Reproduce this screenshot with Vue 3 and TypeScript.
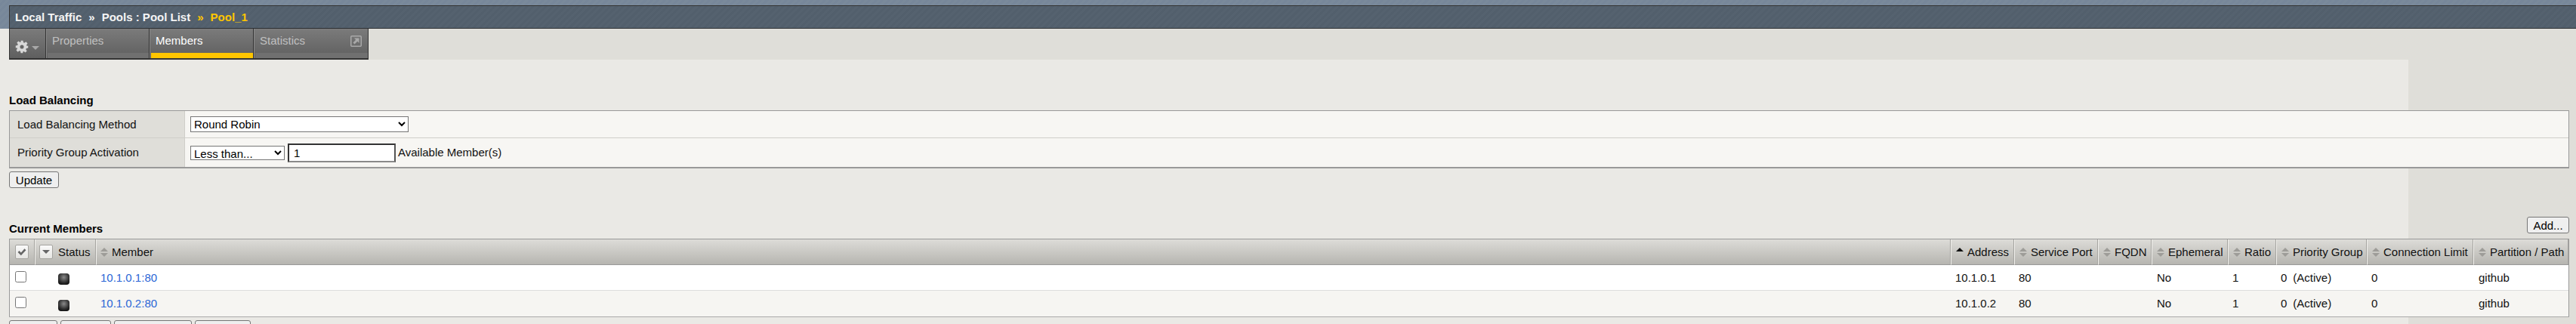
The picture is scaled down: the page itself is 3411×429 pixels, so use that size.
<script setup lang="ts">
// Pool member page: breadcrumb, tabs, load balancing form, current members table
interface Member {
  name: string;
  address: string;
  port: string;
  ephemeral: string;
  ratio: string;
  group: string;
  limit: string;
  partition: string;
}

const members: Member[] = [
  { name: '10.1.0.1:80', address: '10.1.0.1', port: '80', ephemeral: 'No', ratio: '1', group: '0', limit: '0', partition: 'github' },
  { name: '10.1.0.2:80', address: '10.1.0.2', port: '80', ephemeral: 'No', ratio: '1', group: '0', limit: '0', partition: 'github' },
];

const sortColumns = ['Service Port', 'FQDN', 'Ephemeral', 'Ratio', 'Priority Group', 'Connection Limit', 'Partition / Path'];
const colWidths = [33, 81, 2456, 84, 111, 71, 101, 64, 120, 141, 126];
const footerButtons = [
  { label: 'Enable', width: 64 },
  { label: 'Disable', width: 67 },
  { label: 'Force Offline', width: 103 },
  { label: 'Remove', width: 74 },
];
</script>

<template>
  <div class="page">
    <header class="banner">
      <div class="crumbs">
        <span>Local Traffic</span>
        <span class="sep">»</span>
        <span>Pools : Pool List</span>
        <span class="sep current">»</span>
        <span class="current">Pool_1</span>
      </div>
    </header>

    <div class="strip">
      <nav class="tabs">
        <div class="tab gear">
          <svg class="gear-icon" viewBox="0 0 24 24" width="18" height="18">
            <path fill="#d8d8d8" d="M10 1h4l.6 3.2 1.9.8 2.7-1.900 2.800 2.800-1.900 2.700.8 1.900L23 10v4l-3.200.6-.8 1.900 1.900 2.700-2.800 2.800-2.700-1.900-1.900.8L14 23h-4l-.6-3.200-1.900-.8-2.700 1.900-2.800-2.800 1.900-2.700-.8-1.900L1 14v-4l3.200-.6.8-1.900-1.900-2.700 2.800-2.800 2.700 1.900 1.900-.8z" />
            <circle cx="12" cy="12" r="3.400" fill="#666" />
          </svg>
          <span class="caret"></span>
        </div>
        <div class="tab prop">Properties</div>
        <div class="tab active">Members</div>
        <div class="tab stats">
          <span>Statistics</span>
          <svg class="ext" viewBox="0 0 15 15" width="15" height="15">
            <rect x="0.750" y="0.750" width="13.500" height="13.500" rx="1" fill="none" stroke="#a9a9a9" stroke-width="1.500" />
            <path d="M5 3.500h6.500V10L9.300 7.800 5.500 11.500 3.500 9.500l3.700-3.800z" fill="#a9a9a9" />
          </svg>
        </div>
      </nav>
    </div>

    <main class="content">
      <h2 class="title first">Load Balancing</h2>
      <table class="form">
        <tbody>
          <tr class="method">
            <th>Load Balancing Method</th>
            <td>
              <select class="sel wide"><option>Round Robin</option></select>
            </td>
          </tr>
          <tr class="priority">
            <th>Priority Group Activation</th>
            <td>
              <div class="inline">
                <select class="sel narrow"><option>Less than...</option></select>
                <input class="num" value="1" />
                <span>Available Member(s)</span>
              </div>
            </td>
          </tr>
        </tbody>
      </table>
      <button class="btn update">Update</button>

      <div class="members-head">
        <h2 class="title">Current Members</h2>
        <button class="btn add">Add...</button>
      </div>

      <table class="grid">
        <colgroup>
          <col v-for="(w, i) in colWidths" :key="i" :style="{ width: w + 'px' }" />
        </colgroup>
        <thead>
          <tr>
            <th>
              <span class="hbox">
                <svg viewBox="0 0 18 18" width="14" height="14"><path d="M2 9l2.500-2.500 3 3L13.500 3 16 5.500 7.500 14.500z" fill="#666" /></svg>
              </span>
            </th>
            <th>
              <div class="hcell status-head">
                <span class="hbox"><span class="tri-down"></span></span>
                <span>Status</span>
              </div>
            </th>
            <th>
              <div class="hcell member-head"><span class="sort"></span><span>Member</span></div>
            </th>
            <th>
              <div class="hcell"><span class="sort up"></span><span>Address</span></div>
            </th>
            <th v-for="c in sortColumns" :key="c">
              <div class="hcell"><span class="sort"></span><span>{{ c }}</span></div>
            </th>
          </tr>
        </thead>
        <tbody>
          <tr v-for="m in members" :key="m.name">
            <td class="check"><input type="checkbox" /></td>
            <td class="status"><span class="led"></span></td>
            <td><a class="link" href="#">{{ m.name }}</a></td>
            <td>{{ m.address }}</td>
            <td>{{ m.port }}</td>
            <td></td>
            <td class="wider">{{ m.ephemeral }}</td>
            <td>{{ m.ratio }}</td>
            <td><span class="group">{{ m.group }}</span>(Active)</td>
            <td>{{ m.limit }}</td>
            <td class="wider">{{ m.partition }}</td>
          </tr>
        </tbody>
      </table>

      <div class="footer">
        <button v-for="b in footerButtons" :key="b.label" class="btn" :style="{ width: b.width + 'px' }">{{ b.label }}</button>
      </div>
    </main>
  </div>
</template>

<style scoped>
.page {
  width: 3411px;
  height: 429px;
  overflow: hidden;
  font: 15px/18px "Liberation Sans", Arial, sans-serif;
  color: #111;
  background: linear-gradient(to right, #eae9e5 3189px, #dfded9 3189px);
}
.banner {
  height: 38px;
  padding: 7px 0 0 12px;
  box-sizing: border-box;
  background: repeating-linear-gradient(135deg, #7a8a9b 0 3px, #77879a 3px 6px);
}
.crumbs {
  height: 31px;
  box-sizing: border-box;
  display: flex;
  align-items: center;
  gap: 9px;
  padding-left: 7px;
  border-top: 1px solid #333;
  border-left: 1px solid #333;
  border-bottom: 1px solid #2c2f33;
  font-size: 15px;
  font-weight: bold;
  color: #f4f4f4;
  background: repeating-linear-gradient(135deg, #55626f 0 3px, #525f6c 3px 6px);
}
.crumbs .current {
  color: #ffc600;
}
.strip {
  margin-left: 12px;
  height: 41px;
  background: #dfded9;
}
.tabs {
  display: flex;
  width: 476px;
  height: 41px;
  box-sizing: border-box;
  border: 1px solid #333;
  border-top: none;
  border-bottom-width: 2px;
}
.tab {
  position: relative;
  box-sizing: border-box;
  height: 39px;
  padding: 7px 0 0 8px;
  color: #c0c0c0;
  border-right: 1px solid #333;
  background: linear-gradient(#7b7b7b, #5f5f5f);
}
.tab.prop,
.tab.stats,
.tab.active {
  box-shadow: inset 1px 0 #8a8a8a;
}
.tab.prop::after,
.tab.stats::after,
.tab.active::after {
  content: "";
  position: absolute;
  left: 2px;
  right: 0;
  bottom: 0;
  height: 7px;
  background: #707070;
}
.tab.active::after {
  background: #ffc600;
}
.gear {
  width: 48px;
  display: flex;
  align-items: center;
  gap: 4px;
  padding: 8px 0 0 7px;
}
.caret {
  border-top: 5px solid #a8a8a8;
  border-left: 5px solid transparent;
  border-right: 5px solid transparent;
  margin-top: 4px;
}
.prop {
  width: 137px;
}
.active {
  width: 138px;
  color: #fff;
}
.stats {
  flex: 1;
  display: flex;
  justify-content: space-between;
  border-right: none;
  padding-right: 8px;
}
.ext {
  margin-top: 2px;
}
.content {
  padding: 45px 9px 0 12px;
}
.title {
  margin: 0;
  font-size: 15px;
  line-height: 18px;
  font-weight: bold;
  color: #000;
}
.title.first {
  margin-bottom: 4px;
}
.form {
  width: 3390px;
  table-layout: fixed;
  border-collapse: separate;
  border-spacing: 0;
  border: 1px solid #999;
  border-bottom-width: 2px;
  background: #f7f6f3;
}
.form th {
  width: 232px;
  padding: 0 0 0 10px;
  box-sizing: border-box;
  text-align: left;
  font-weight: normal;
  background: #dfded9;
  border-right: 1px solid #cfcec9;
}
.form td {
  padding: 0 0 0 7px;
}
.form .method th,
.form .method td {
  height: 35px;
  border-bottom: 1px solid #cfcec9;
}
.form .priority th,
.form .priority td {
  height: 38px;
}
.inline {
  display: flex;
  align-items: center;
  gap: 4px;
}
.inline span {
  margin-left: -1px;
}
.sel {
  font: 15px "Liberation Sans", Arial, sans-serif;
  background: #fff;
  border: 1px solid #767676;
  border-radius: 0;
  color: #000;
  box-sizing: border-box;
  display: block;
}
.wide {
  width: 289px;
  height: 21px;
}
.narrow {
  width: 125px;
  height: 19px;
}
.num {
  width: 143px;
  height: 25px;
  box-sizing: border-box;
  margin: 0;
  padding: 0 6px;
  font: 15px "Liberation Sans", Arial, sans-serif;
  background: #fff;
  border: 2px solid #333;
  border-right-color: #555;
  border-bottom-color: #8a8a8a;
}
.btn {
  display: block;
  height: 22px;
  padding: 0;
  box-sizing: border-box;
  font: 15px "Liberation Sans", Arial, sans-serif;
  color: #000;
  background: #efefef;
  border: 1px solid #767676;
  border-radius: 3px;
}
.update {
  width: 66px;
  margin-top: 4px;
}
.members-head {
  margin-top: 38px;
  height: 29px;
  display: flex;
  justify-content: space-between;
  align-items: flex-start;
}
.members-head .title {
  margin-top: 7px;
}
.add {
  width: 56px;
}
.grid {
  width: 3390px;
  table-layout: fixed;
  border-collapse: separate;
  border-spacing: 0;
  border: 1px solid #999;
  border-bottom-color: #aaa;
  background: #fff;
}
.grid th {
  height: 33px;
  padding: 0;
  font-weight: normal;
  text-align: left;
  white-space: nowrap;
  overflow: hidden;
  background: linear-gradient(#dddcd8, #b6b5b0);
  border-left: 1px solid #f1f0ec;
  border-bottom: 1px solid #999;
  box-shadow: inset -1px 0 #a5a4a0;
}
.grid th:first-child {
  border-left: none;
  padding-left: 7px;
}
.hcell {
  display: flex;
  align-items: center;
  gap: 5px;
  padding-left: 6px;
}
.member-head {
  padding-left: 5px;
}
.status-head {
  gap: 7px;
  padding-left: 5px;
}
.hbox {
  width: 18px;
  height: 19px;
  box-sizing: border-box;
  display: flex;
  align-items: center;
  justify-content: center;
  border: 1px solid #a5a4a0;
  border-radius: 2px;
  background: linear-gradient(#fafafa, #e6e5e2);
}
.tri-down {
  border-top: 5px solid #666;
  border-left: 5px solid transparent;
  border-right: 5px solid transparent;
}
.sort {
  position: relative;
  flex: none;
  width: 10px;
  height: 12px;
}
.sort::before,
.sort::after {
  content: "";
  position: absolute;
  left: 0;
  border-left: 5px solid transparent;
  border-right: 5px solid transparent;
}
.sort::before {
  top: 0;
  border-bottom: 5px solid #9d9c98;
}
.sort::after {
  bottom: 0;
  border-top: 5px solid #9d9c98;
}
.sort.up::before {
  border-bottom-color: #111;
}
.sort.up::after {
  display: none;
}
.grid td {
  height: 33px;
  padding: 0 0 0 6px;
  border-bottom: 1px solid #ddd;
}
.grid tbody tr:nth-child(2) td {
  height: 34px;
  border-bottom: none;
  background: #f6f5f2;
}
.grid td.check {
  padding-left: 7px;
}
.grid td.wider {
  padding-left: 7px;
}
.check input {
  display: block;
  width: 15px;
  height: 15px;
  margin: -3px 0 0;
}
.led {
  display: block;
  width: 15px;
  height: 15px;
  margin: 4px 0 0 25px;
  border-radius: 4px;
  background: radial-gradient(circle at 50% 35%, #8a8a8a, #2a2a2a 60%, #050505 95%);
}
.link {
  color: #2a66d6;
  text-decoration: none;
}
.group {
  margin-right: 8px;
}
.footer {
  display: flex;
  gap: 4px;
  margin-top: 4px;
}
</style>

<style>
html,
body {
  margin: 0;
  overflow: hidden;
}
</style>
